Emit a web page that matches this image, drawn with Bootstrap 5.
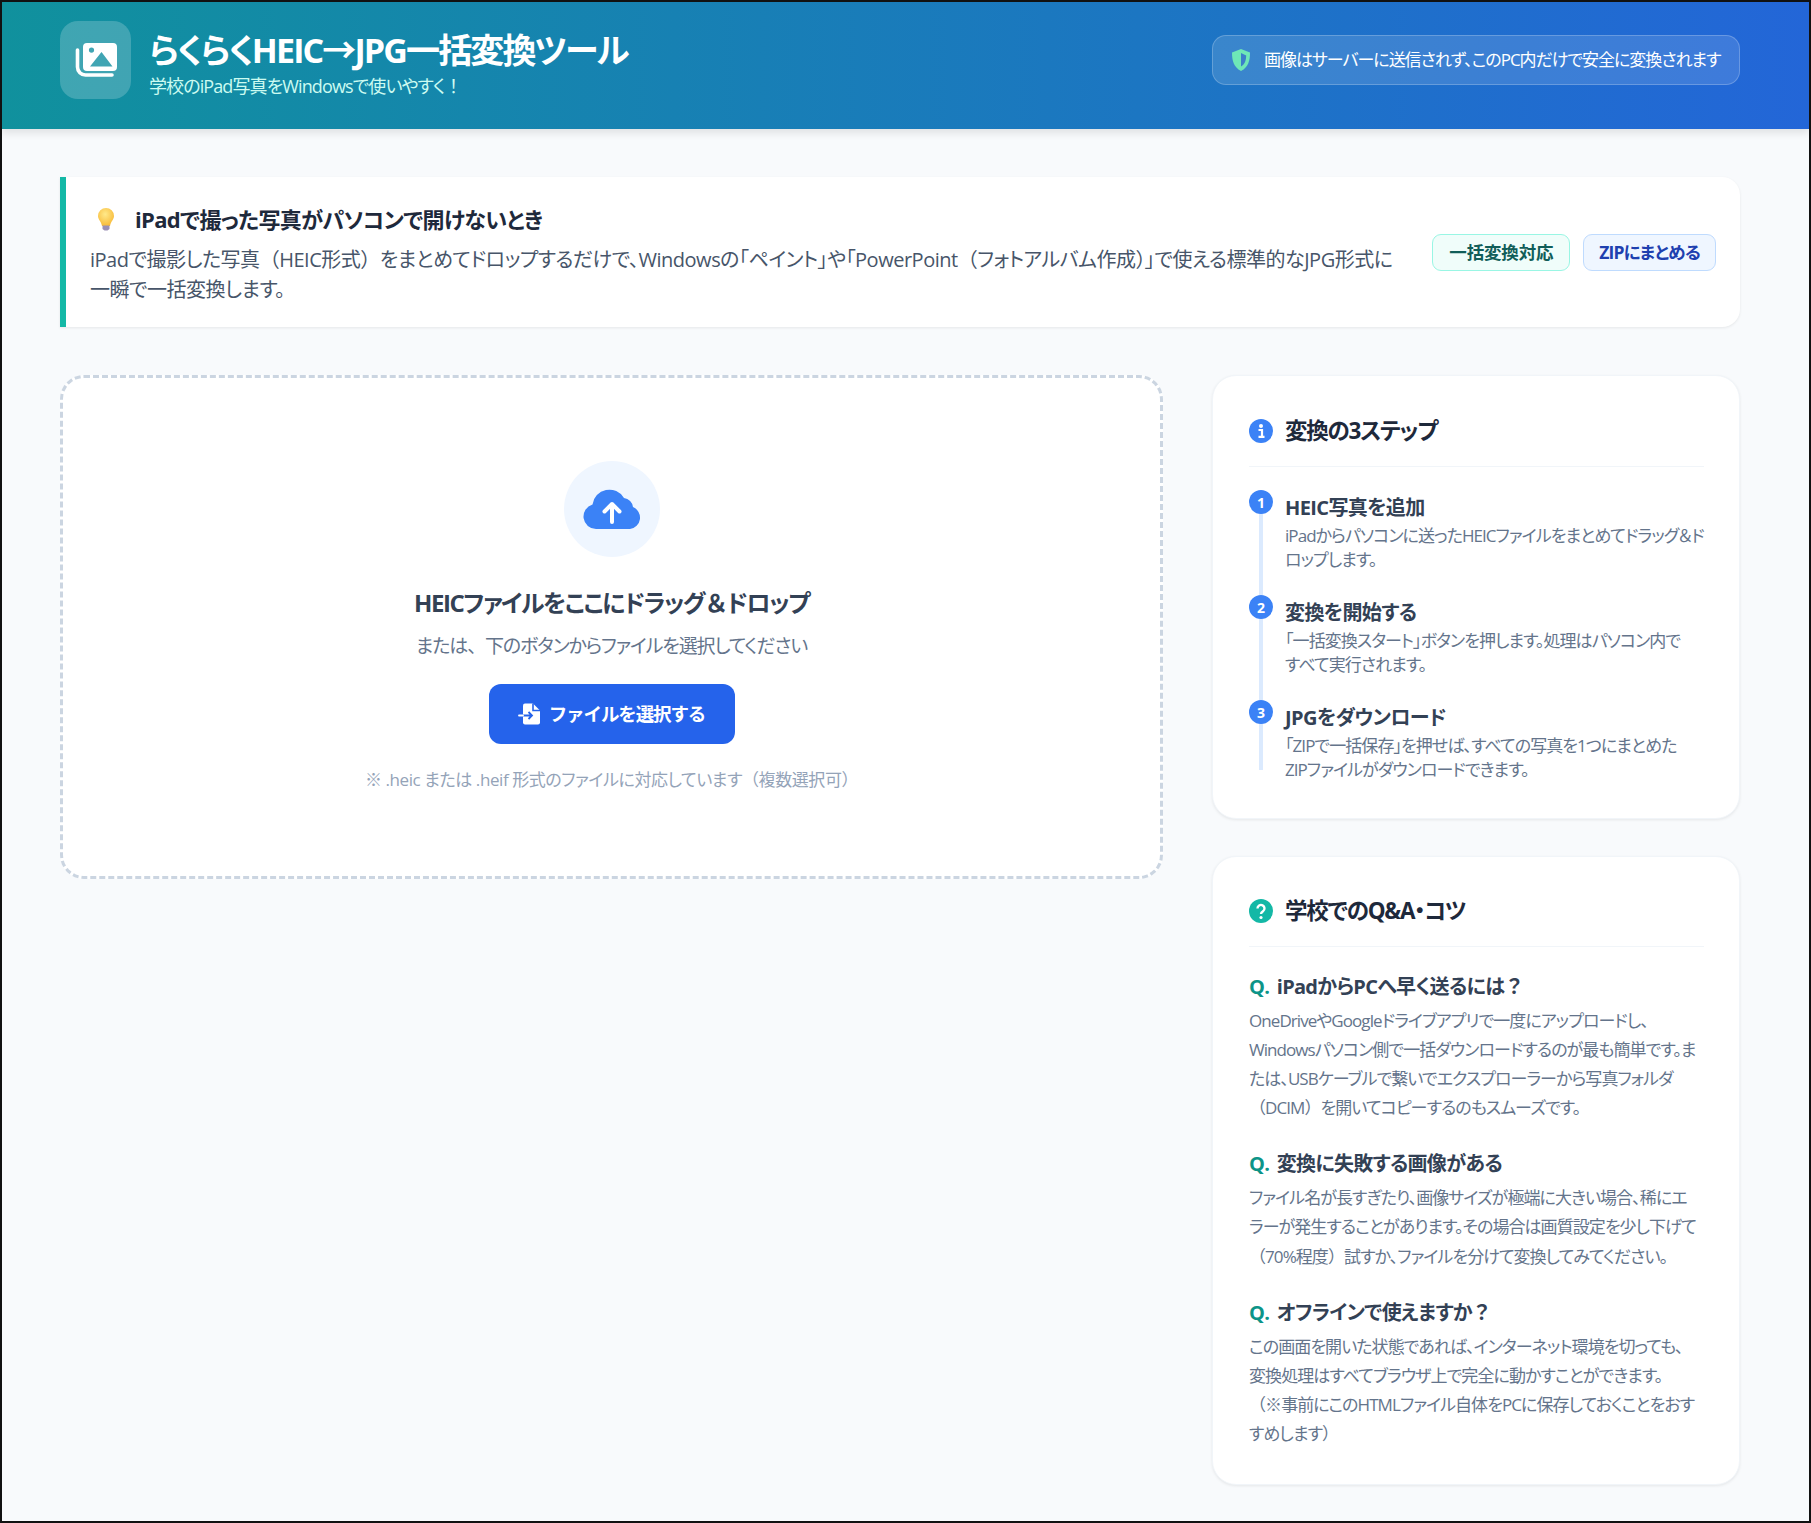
<!doctype html>
<html lang="ja">
<head>
<meta charset="utf-8">
<title>らくらくHEIC→JPG一括変換ツール</title>
<link href="https://cdn.jsdelivr.net/npm/bootstrap@5.3.0/dist/css/bootstrap.min.css" rel="stylesheet">
<style>
html,body{height:100%}
body{background:#f8fafc;font-family:"Open Sans","Noto Sans CJK JP",sans-serif;font-feature-settings:"palt";color:#334155;border:2px solid #111;min-height:1523px;overflow:hidden}
.zenk{font-feature-settings:"palt" 0}
.top-band{height:127px;background:linear-gradient(90deg,#10919d,#2366d8);padding:0 69px 0 58px;box-shadow:0 4px 8px rgba(0,0,0,.1);color:#fff}
.brand-gap{gap:18px}
.logo-box{width:71px;height:78px;margin-top:-12px;border-radius:18px;background:rgba(255,255,255,.2)}
.title-block{padding-bottom:4px}
.site-title{font-size:34px;font-weight:700;line-height:40px;letter-spacing:-.055em;margin:0 0 4px}
.site-sub{font-size:18px;line-height:24px;color:#ccfbf1;margin:0;letter-spacing:-.05em}
.safe-pill{width:528px;height:50px;margin-bottom:11px;border:1px solid rgba(255,255,255,.22);background:rgba(255,255,255,.13);border-radius:14px;padding:0 18px;font-size:17px;letter-spacing:-.06em;gap:13px}
.safe-pill svg{flex:none}
.main-wrap{padding:48px 69px 0 58px}
.notice-box{height:150px;background:#fff;border-left:6px solid #14b8a6;border-radius:0 18px 18px 0;box-shadow:0 1px 3px rgba(0,0,0,.08);padding:0 24px;margin-bottom:48px}
.notice-body{padding-top:4px}
.notice-title{font-size:22px;font-weight:700;color:#1e293b;line-height:30px;margin:0 0 11px;letter-spacing:-.03em;gap:19px}
.notice-title svg{margin-left:6px;flex:none}
.notice-text{font-size:20px;line-height:30px;color:#475569;margin:0;letter-spacing:-.024em}
.tag-one,.tag-two{height:37px;border-radius:9px;border:1px solid;font-size:17.500px;font-weight:700;padding:0 16px;letter-spacing:-.01em}
.tag-one{color:#115e59;background:#f0fdfa;border-color:#99f6e4}
.tag-two{color:#1e40af;background:#eff6ff;border-color:#bfdbfe;padding:0 15px;letter-spacing:-.05em}
.tag-gap{gap:13px}
.left-col{width:1103px;flex:none}
.right-col{width:528px;flex:none;gap:36.500px}
.drop-area{height:504px;background:#fff;border:3px dashed #cbd5e1;border-radius:24px}
.up-circle{width:96px;height:96px;background:#eff6ff}
.drop-title{font-size:24px;font-weight:700;color:#334155;line-height:36px;margin:28px 0 10px;letter-spacing:-.06em}
.drop-sub{font-size:19px;color:#64748b;line-height:30px;margin:0 0 23px;letter-spacing:-.06em}
.pick-btn{width:246px;height:60px;background:#2563eb;color:#fff;border:0;border-radius:12px;font-size:18.500px;font-weight:700;letter-spacing:-.06em}
.pick-btn:hover{background:#2563eb;color:#fff}
.drop-note{font-size:17px;color:#94a3b8;line-height:26px;margin:23px 0 0;letter-spacing:-.025em}
.side-box{background:#fff;border:1px solid #f1f5f9;border-radius:24px;box-shadow:0 1px 3px rgba(0,0,0,.08);padding:36px 35px 35px 36px}
.side-box-steps{padding:37px 35px 40px 36px}
.side-head{font-size:22.500px;font-weight:700;color:#1e293b;line-height:36px;border-bottom:1px solid #f1f5f9;padding-bottom:17px;margin-bottom:23px;letter-spacing:-.055em}
.head-ico{margin-right:4px;flex:none}
.step-row{height:105px;padding-left:36px}
.step-row:last-child{height:78px}
.step-line{left:10px;top:20px;bottom:0;width:4px;background:#dbeafe}
.step-row:last-child .step-line{bottom:8px}
.step-num{left:0;top:0;width:24px;height:24px;background:#3b82f6;color:#fff;font-size:14px;font-weight:700;letter-spacing:0}
.step-name{font-size:20px;font-weight:700;color:#334155;line-height:30px;margin:0 0 1px;letter-spacing:-.03em;padding-top:3px}
.step-desc{font-size:17px;color:#64748b;line-height:24px;margin:0;letter-spacing:-.055em}
.qa-name{font-size:20px;font-weight:700;color:#334155;line-height:30px;padding-top:2px;margin:0 0 4px;letter-spacing:-.035em}
.qa-q{color:#0d9488;margin-right:3px}
.qa-ans{font-size:17px;color:#64748b;line-height:29.300px;margin:0 0 24.500px;letter-spacing:-.055em}
.qa-ans:last-child{margin:0}
</style>
</head>
<body>
<header class="top-band d-flex align-items-center justify-content-between">
  <div class="d-flex align-items-center brand-gap">
    <div class="logo-box d-flex align-items-center justify-content-center">
      <svg width="42" height="36" viewBox="0 0 42 36"><path d="M2.500 8v17a8 8 0 0 0 8 8H37" fill="none" stroke="#fff" stroke-width="3.600" stroke-linecap="round"/><path fill="#fff" fill-rule="evenodd" d="M12 1h26a4 4 0 0 1 4 4v20a4 4 0 0 1-4 4H12a4 4 0 0 1-4-4V5a4 4 0 0 1 4-4zm4.500 4.500a2.600 2.600 0 1 0 0 5.200 2.600 2.600 0 0 0 0-5.200zM26.500 10 15 24.500h22.500z"/></svg>
    </div>
    <div class="title-block">
      <h1 class="site-title">らくらくHEIC→JPG一括変換ツール</h1>
      <p class="site-sub">学校のiPad写真をWindowsで使いやすく<span class="zenk">！</span></p>
    </div>
  </div>
  <div class="safe-pill d-flex align-items-center">
    <svg width="20" height="24" viewBox="0 0 20 24"><path fill="#6ee7b7" d="M10 1 1 4.500c0 8 1.500 14.500 9 18.500 7.500-4 9-10.500 9-18.500z"/><path fill="#3b7fc9" d="M10 5v13.500c4-2.500 5-6 5.200-11z"/></svg>
    <span class="text-nowrap">画像はサーバーに送信されず、このPC内だけで安全に変換されます</span>
  </div>
</header>
<main class="main-wrap">
  <section class="notice-box d-flex align-items-center justify-content-between gap-4">
    <div class="notice-body">
      <h2 class="notice-title d-flex align-items-center">
        <svg width="20" height="24" viewBox="0 0 20 24"><defs><radialGradient id="bulb" cx=".45" cy=".35" r=".7"><stop offset="0" stop-color="#ffe98a"/><stop offset="1" stop-color="#f7b733"/></radialGradient></defs><path fill="url(#bulb)" d="M10 1a8 8 0 0 0-8 8c0 3.500 3 5 4 10h8c1-5 4-6.500 4-10a8 8 0 0 0-8-8z"/><path fill="#9a8fb5" d="M6.500 18.500h7v3.500l-2 1.500h-3l-2-1.500z"/></svg>
        <span>iPadで撮った写真がパソコンで開けないとき</span>
      </h2>
      <p class="notice-text text-nowrap">iPadで撮影した写真<span class="zenk">（</span>HEIC形式<span class="zenk">）</span>をまとめてドロップするだけで、Windowsの「ペイント」や「PowerPoint<span class="zenk">（</span>フォトアルバム作成<span class="zenk">）</span>」で使える標準的なJPG形式に<br>一瞬で一括変換します。</p>
    </div>
    <div class="d-flex tag-gap flex-shrink-0">
      <span class="tag-one d-flex align-items-center">一括変換対応</span>
      <span class="tag-two d-flex align-items-center">ZIPにまとめる</span>
    </div>
  </section>
  <div class="d-flex justify-content-between align-items-start">
    <section class="left-col">
      <div class="drop-area d-flex flex-column align-items-center justify-content-center text-center">
        <div class="up-circle rounded-circle d-flex align-items-center justify-content-center">
          <svg width="58" height="42" viewBox="0 0 58 42"><path fill="#3b82f6" d="M13 41A12.500 12.500 0 0 1 9.500 16.500 17 17 0 0 1 41 10a10 10 0 0 1 9 9 11.500 11.500 0 0 1-3 22z"/><path d="M29 34V16M21.500 23.500 29 16l7.500 7.500" fill="none" stroke="#fff" stroke-width="4" stroke-linecap="round" stroke-linejoin="round"/></svg>
        </div>
        <h2 class="drop-title">HEICファイルをここにドラッグ<span class="zenk">＆</span>ドロップ</h2>
        <p class="drop-sub">または<span class="zenk">、</span>下のボタンからファイルを選択してください</p>
        <button class="btn pick-btn d-flex align-items-center justify-content-center gap-2" type="button">
          <svg width="23" height="22" viewBox="0 0 23 22"><path fill="#fff" d="M5 2.500A2 2 0 0 1 7 .5h8l7 7v12a2 2 0 0 1-2 2H7a2 2 0 0 1-2-2z"/><path d="M15 .5v7h7" fill="none" stroke="#2563eb" stroke-width="1.600"/><path d="M5 12.500h9M10.500 9l3.500 3.500-3.500 3.500" fill="none" stroke="#2563eb" stroke-width="1.800"/><path d="M1 12.500h4" stroke="#fff" stroke-width="1.800" stroke-linecap="round"/></svg>
          <span>ファイルを選択する</span>
        </button>
        <p class="drop-note">※ .heic または .heif 形式のファイルに対応しています<span class="zenk">（</span>複数選択可<span class="zenk">）</span></p>
      </div>
    </section>
    <aside class="right-col d-flex flex-column">
      <div class="side-box side-box-steps">
        <h3 class="side-head d-flex align-items-center gap-2"><svg class="head-ico" width="24" height="24" viewBox="0 0 24 24"><circle cx="12" cy="12" r="12" fill="#3b82f6"/><circle cx="12" cy="7" r="2" fill="#fff"/><path d="M9.500 11h3.500v6.500M9.500 17.800h6" fill="none" stroke="#fff" stroke-width="2.200"/></svg><span>変換の3ステップ</span></h3>
        <div class="step-row position-relative">
          <span class="step-line position-absolute"></span><span class="step-num position-absolute rounded-circle d-flex align-items-center justify-content-center">1</span>
          <h4 class="step-name">HEIC写真を追加</h4>
          <p class="step-desc text-nowrap">iPadからパソコンに送ったHEICファイルをまとめてドラッグ＆ド<br>ロップします。</p>
        </div>
        <div class="step-row position-relative">
          <span class="step-line position-absolute"></span><span class="step-num position-absolute rounded-circle d-flex align-items-center justify-content-center">2</span>
          <h4 class="step-name">変換を開始する</h4>
          <p class="step-desc text-nowrap">「一括変換スタート」ボタンを押します。処理はパソコン内で<br>すべて実行されます。</p>
        </div>
        <div class="step-row position-relative">
          <span class="step-line position-absolute"></span><span class="step-num position-absolute rounded-circle d-flex align-items-center justify-content-center">3</span>
          <h4 class="step-name">JPGをダウンロード</h4>
          <p class="step-desc text-nowrap">「ZIPで一括保存」を押せば、すべての写真を1つにまとめた<br>ZIPファイルがダウンロードできます。</p>
        </div>
      </div>
      <div class="side-box">
        <h3 class="side-head d-flex align-items-center gap-2"><svg class="head-ico" width="24" height="24" viewBox="0 0 24 24"><circle cx="12" cy="12" r="12" fill="#14b8a6"/><path d="M8.500 9.500a3.500 3.500 0 1 1 5.500 2.800c-1.300.9-2 1.400-2 2.700" fill="none" stroke="#fff" stroke-width="2.400"/><circle cx="12" cy="18.500" r="1.600" fill="#fff"/></svg><span>学校でのQ&amp;A・コツ</span></h3>
        <h4 class="qa-name"><span class="qa-q">Q.</span> iPadからPCへ早く送るには<span class="zenk">？</span></h4>
        <p class="qa-ans text-nowrap">OneDriveやGoogleドライブアプリで一度にアップロードし、<br>Windowsパソコン側で一括ダウンロードするのが最も簡単です。ま<br>たは、USBケーブルで繋いでエクスプローラーから写真フォルダ<br><span class="zenk">（</span>DCIM<span class="zenk">）</span>を開いてコピーするのもスムーズです。</p>
        <h4 class="qa-name"><span class="qa-q">Q.</span> 変換に失敗する画像がある</h4>
        <p class="qa-ans text-nowrap">ファイル名が長すぎたり、画像サイズが極端に大きい場合、稀にエ<br>ラーが発生することがあります。その場合は画質設定を少し下げて<br><span class="zenk">（</span>70%程度<span class="zenk">）</span>試すか、ファイルを分けて変換してみてください。</p>
        <h4 class="qa-name"><span class="qa-q">Q.</span> オフラインで使えますか<span class="zenk">？</span></h4>
        <p class="qa-ans text-nowrap">この画面を開いた状態であれば、インターネット環境を切っても、<br>変換処理はすべてブラウザ上で完全に動かすことができます。<br><span class="zenk">（</span>※事前にこのHTMLファイル自体をPCに保存しておくことをおす<br>すめします<span class="zenk">）</span></p>
      </div>
    </aside>
  </div>
</main>
<script src="https://cdn.jsdelivr.net/npm/bootstrap@5.3.0/dist/js/bootstrap.bundle.min.js"></script>
</body>
</html>
